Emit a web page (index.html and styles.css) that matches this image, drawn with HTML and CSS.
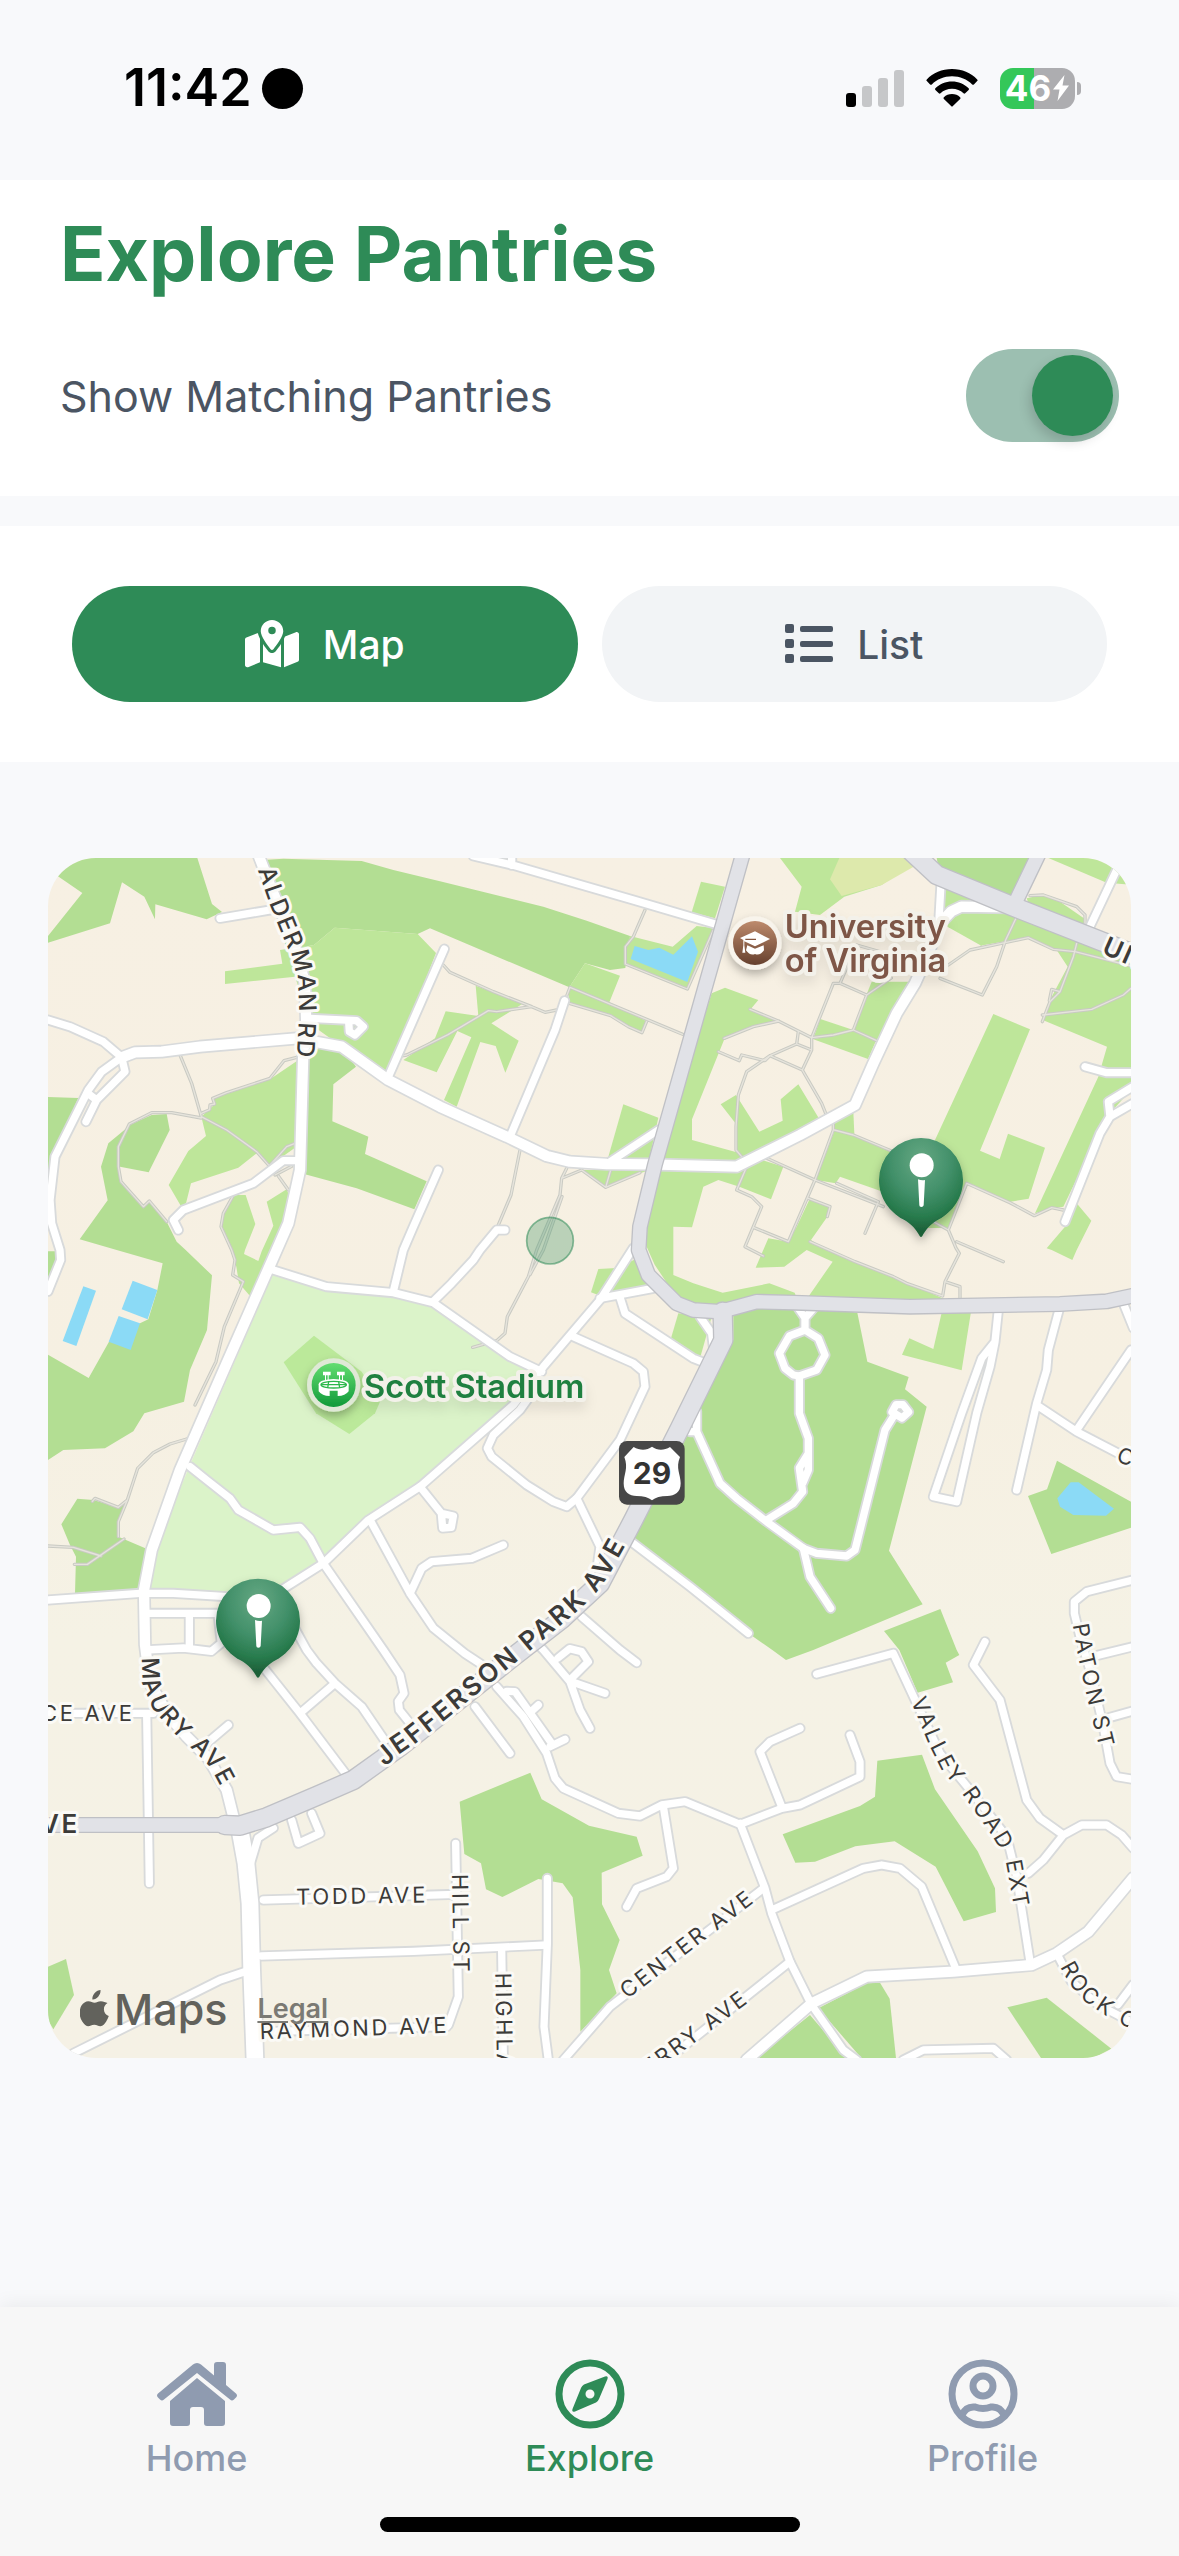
FILE: index.html
```html
<!DOCTYPE html>
<html lang="en">
  <head>
    <meta charset="UTF-8" />
    <meta name="viewport" content="width=device-width, initial-scale=1.0" />
    <title>Explore Pantries</title>
    <link rel="stylesheet" href="styles.css">
  </head>
  <body>
    <div class="status-bar">
      <div class="status-left">
        <span class="time">11:42</span>
        <span class="camera-dot"></span>
      </div>
      <div class="status-right">
        <svg class="signal" viewBox="0 0 58 38" aria-hidden="true">
          <rect x="0" y="24" width="10" height="14" rx="3" fill="#000" />
          <rect x="16" y="17" width="10" height="21" rx="3" fill="#c6c7c9" />
          <rect x="32" y="9" width="10" height="29" rx="3" fill="#c6c7c9" />
          <rect x="48" y="1" width="10" height="37" rx="3" fill="#c6c7c9" />
        </svg>
        <svg class="wifi" viewBox="0 0 52 38" aria-hidden="true">
          <path d="M26 0C16 0 7 4 .8 10.400a1.200 1.200 0 0 0 0 1.700l3.300 3.300a1.200 1.200 0 0 0 1.700 0C11 10.300 18 7.300 26 7.300s15 3 20.200 8.100a1.200 1.200 0 0 0 1.700 0l3.300-3.300a1.200 1.200 0 0 0 0-1.700C45 4 36 0 26 0z" />
          <path d="M26 12.500c-6.500 0-12.300 2.500-16.600 6.700a1.200 1.200 0 0 0 0 1.700l3.400 3.300a1.200 1.200 0 0 0 1.700 0c3-2.800 7-4.500 11.500-4.500s8.500 1.700 11.500 4.500a1.200 1.200 0 0 0 1.700 0l3.400-3.300a1.200 1.200 0 0 0 0-1.700C38.300 15 32.500 12.500 26 12.500z" />
          <path d="M26 25c-3.200 0-6 1.200-8.100 3.200a1.200 1.200 0 0 0 0 1.700l7.200 7.200a1.200 1.200 0 0 0 1.800 0l7.200-7.200a1.200 1.200 0 0 0 0-1.700C32 26.200 29.200 25 26 25z" />
        </svg>
        <div class="battery">
          <span>46</span>
          <svg viewBox="0 0 18 26" aria-hidden="true"><path d="M12.500 0 1 14.500h6.500L5.500 26 17 10.500h-6.500z" /></svg>
        </div>
      </div>
    </div>

    <header class="header">
      <h1>Explore Pantries</h1>
      <div class="toggle-row">
        <label for="matching">Show Matching Pantries</label>
        <input type="checkbox" id="matching" class="switch" checked />
      </div>
    </header>

    <div class="view-tabs">
      <button class="tab active" type="button">
        <svg class="map-icon" viewBox="0 0 576 512" aria-hidden="true"><path d="M408 120c0 54.600-73.100 151.900-105.200 192c-7.700 9.600-22 9.600-29.600 0C241.100 271.900 168 174.600 168 120C168 53.700 221.700 0 288 0s120 53.700 120 120zm8 80.400c3.500-6.900 6.700-13.800 9.600-20.600c.5-1.200 1-2.500 1.500-3.700l116-46.400C558.900 123.400 576 135 576 152V422.800c0 9.800-6 18.600-15.100 22.300L416 503V200.400zM137.600 138.300c2.400 14.100 7.200 28.300 12.800 41.500c2.900 6.800 6.100 13.700 9.600 20.600V451.800L32.900 502.700C17.100 509 0 497.400 0 480.400V209.600c0-9.800 6-18.600 15.100-22.300l122.600-49zM327.800 332c13.900-17.400 35.700-45.700 56.200-77V504.300L192 449.400V255c20.500 31.300 42.300 59.600 56.200 77c20.500 25.600 59.100 25.600 79.600 0zM288 152a40 40 0 1 0 0-80 40 40 0 1 0 0 80z" /></svg>
        Map
      </button>
      <button class="tab" type="button">
        <svg class="list-icon" viewBox="0 0 48 40" aria-hidden="true">
          <rect x="0" y="0" width="9" height="9" rx="2" /><rect x="15" y="2" width="33" height="6" rx="2" />
          <rect x="0" y="15" width="9" height="9" rx="2" /><rect x="15" y="17" width="33" height="6" rx="2" />
          <rect x="0" y="30" width="9" height="9" rx="2" /><rect x="15" y="32" width="33" height="6" rx="2" />
        </svg>
        List
      </button>
    </div>

    <main class="map-section">
      <div class="map-card">
        <svg class="map" viewBox="0 0 3249 3600" role="img" aria-label="Map of pantries near the University of Virginia">
          <defs>
            <linearGradient id="land" x1="0" y1="0" x2="0" y2="1">
              <stop offset="0" stop-color="#f7f0e3" />
              <stop offset=".45" stop-color="#f6f0e2" />
              <stop offset=".65" stop-color="#f5f2e5" />
              <stop offset="1" stop-color="#f5f1e5" />
            </linearGradient>
            <linearGradient id="brown" x1="0" y1="0" x2="0" y2="1">
              <stop offset="0" stop-color="#bd8a6c" />
              <stop offset="1" stop-color="#67412f" />
            </linearGradient>
            <linearGradient id="lime" x1="0" y1="0" x2="0" y2="1">
              <stop offset="0" stop-color="#63dd70" />
              <stop offset="1" stop-color="#109a3a" />
            </linearGradient>
            <radialGradient id="pinFill" cx=".5" cy=".22" r=".72">
              <stop offset="0" stop-color="#66a883" />
              <stop offset=".5" stop-color="#42906a" />
              <stop offset=".8" stop-color="#287b4d" />
              <stop offset="1" stop-color="#1d6039" />
            </radialGradient>
            <filter id="drop" x="-40%" y="-40%" width="180%" height="180%">
              <feDropShadow dx="0" dy="14" stdDeviation="14" flood-color="#000" flood-opacity=".28" />
            </filter>

            <g id="footpaths">
              <path d="M396 591 431 676 460 776 536 816 626 881 666 926M460 780 371 764 311 764 244 798 211 866 211 926 219 971 286 1046 304 1029 356 1091" />
              <path d="M746 598 708 608 666 661 536 704 494 721 500 738 486 741 485 755 460 766M741 856 716 866 664 924M681 951 731 925M691 954 721 996" />
              <path d="M554 1016 526 1066 519 1106 551 1176 561 1206 554 1251 586 1271 529 1406 504 1511 441 1641" />
              <path d="M426 1746 416 1743 366 1758 316 1784 269 1831 238 1926 211 1991 211 2036M238 1926 211 1948 141 1921 133 1930M0 2064 76 2068 159 2094M79 2119 118 2119 228 2043" />
              <path d="M1186 321 1206 343 1336 401 1451 446 1491 463 1526 456M1451 446 1346 461 1321 458 1291 476 1200 530 1076 591 1046 596" />
              <path d="M1791 156 1756 236 1732 266 1732 318 1918 393 1996 216M1556 414 1566 388 1904 529M1564 436 1688 473 1741 506 1782 524 1796 490" />
              <path d="M1416 876 1389 1011 1351 1101M1556 931 1541 961 1536 1011 1466 1176 1441 1256 1378 1376 1371 1426 1346 1448 1274 1468M1542 1016 1486 1176 1446 1250M1541 961 1601 936 1673 988 1776 944M1688 936 1673 988" />
              <path d="M2028 541 2116 506 2192 489M2106 454 2191 489 2291 539 2356 531 2416 516 2486 548M2291 539 2356 376 2376 376 2456 411 2416 516M2376 376 2426 261 2510 285M2456 411 2530 360" />
              <path d="M2011 581 2074 608 2081 591 2151 608 2166 593 2246 558 2251 521M2166 593 2096 641 2071 711 2064 806 2064 876 2081 896M2166 593 2263 636 2321 736 2333 766M2263 636 2291 576 2291 539M2246 558 2291 576" />
              <path d="M2356 786 2356 816 2301 966 2221 1151 2116 1108M2359 816 2416 831 2536 881M2146 896 2301 966 2506 1046M2366 976 2491 1031 2451 1126M2096 926 2066 996 2111 1016 2141 1046 2091 1166 2146 1194M2281 1021 2346 1046 2338 1076" />
              <path d="M2286 1151 2421 1211 2536 1256 2576 1276 2684 1314 2691 1271 2734 1186 2724 1170 2701 1116 2756 976 2886 1034 2959 1073 3011 1049 3046 1056M2600 1060 2701 1116M2691 1271 2736 1286 2736 1326M2726 1151 2866 1211" />
              <path d="M2701 321 2766 276 2941 239 3016 274 3081 281 3249 324M2906 176 2873 246 2846 326 2803 411 2676 361M3086 256 3076 296 3036 401 3006 431 2983 491M3036 401 3011 394 3004 428M2983 471 3131 454 3226 411 3249 391" />
              <path d="M2946 113 2986 111 3086 146 3111 171 3111 216" />
            </g>

            <g id="streets">
              <path d="M0 486 66 506 166 551 221 598 231 641 146 726 114 791M118 705 146 726" />
              <path d="M221 598 161 641 121 696 21 896 6 1026 11 1096 36 1176 38 1206 0 1300" />
              <path d="M516 181 666 156M786 481 926 488 946 506 921 531 904 521 902 490" />
              <path d="M746 908 706 908 616 976 406 1056 376 1086 391 1116" />
              <path d="M1189 273 1021 656M1550 428 1521 516 1386 836M1171 936 1096 1106 1066 1176 1036 1300M1371 1116 1346 1116 1296 1176 1276 1206 1211 1276 1156 1330" />
              <path d="M1276-6 1396 22 1756 126 2001 198M1391 22 1391-10M2680 60 2672 200" />
              <path d="M676 1236 836 1286 1036 1304 1156 1334 1386 1496 1481 1541" />
              <path d="M1756 1170 1656 1326 1486 1526 1396 1641 1260 1760 1116 1886 961 1986 826 2116 700 2196" />
              <path d="M426 1826 476 1866 546 1921 571 1956 676 2016 756 2008 786 2041 826 2116 1006 2376 1056 2451 1068 2506 1051 2530 1054 2556 1086 2596" />
              <path d="M690 2220 776 2376 806 2416 861 2476 941 2546 1016 2656M640 2420 756 2566 896 2751M756 2566 861 2476" />
              <path d="M966 1986 1086 2206 1156 2310 1250 2386 1326 2436M1086 2206 1121 2131 1151 2111 1271 2101 1366 2061" />
              <path d="M1116 1886 1180 1966 1216 1974 1210 2008 1184 2010 1180 1966" />
              <path d="M1576 1436 1756 1516 1786 1541 1791 1586 1716 1746 1586 1921 1556 1946 1516 1931 1436 1881 1331 1796 1318 1771 1336 1731 1416 1656 1456 1600" />
              <path d="M1586 1921 1656 2066 1646 2140M1656 1321 1816 1291M1716 1318 1731 1366 1936 1501 1961 1511M1956 1376 1991 1426 1996 1466M1676 918 1831 816" />
              <path d="M1946 1660 1946 1721 2016 1876 2066 1921 2156 1991 2266 2071 2306 2086 2396 2094 2421 2076 2511 1716 2536 1676M1926 1721H1946" />
              <path d="M2532 1662 2544 1640 2565 1640 2582 1662 2562 1680Z" />
              <path d="M2156 1986 2236 1936 2264 1901 2254 1830 2281 1786 2281 1741 2254 1666 2254 1556M2281 1786 2281 1836 2264 1876" />
              <path d="M2271 1416 2311 1441 2331 1491 2306 1536 2254 1554 2236 1551 2211 1531 2194 1486 2224 1434ZM2271 1416V1380L2240 1335M2271 1380 2310 1335M2266 2071 2286 2156 2348 2251M1756 2056 1926 2186 2101 2326" />
              <path d="M2851 1356 2841 1451 2801 1501 2741 1666 2656 1916 2726 1931 2786 1666 2826 1526 2841 1451" />
              <path d="M3033 1356 3001 1476 2996 1536 2966 1636 2906 1896M2966 1641 3086 1721 3249 1806M3086 1716 3249 1476M3226 1336 3256 1410" />
              <path d="M3255 2166 3116 2201 3079 2231 3079 2266 3096 2336 3130 2450 3166 2606 3186 2716 3206 2756 3255 2764M3176 2581 3255 2559M3136 2395 3255 2366" />
              <path d="M2306 2448 2536 2386 2606 2536 2676 2686 2766 2796 2876 2936 2906 3056 2946 3311" />
              <path d="M2811 2351 2776 2421 2856 2526 2936 2826 2976 2881 3046 2931 3101 2901 3176 2901 3221 2931 3255 2970M3046 2931 2986 3006 2941 3046" />
              <path d="M3026 3286 3070 3370 3150 3440 3255 3495M3210 3440 3255 3380" />
              <path d="M2076 2896 2151 3091 2171 3166 2226 3311 2291 3441 2386 3576 2426 3606M2171 3156 2446 3031 2501 3021 2556 3031 2621 3086 2721 3326" />
              <path d="M1346 2486 1426 2576 1496 2686 1521 2761 1546 2791 1711 2866 1776 2874 1841 2841 1911 2831 2076 2899 2201 2851 2256 2841 2436 2756 2436 2711 2406 2631" />
              <path d="M2201 2846 2136 2681 2166 2651 2256 2611M1846 2846 1876 3031 1856 3056 1766 3091 1736 3146" />
              <path d="M1376 2500 1401 2501 1511 2656M1446 2564 1471 2541M1506 2666 1551 2644M1281 2546 1386 2686" />
              <path d="M1440 2330 1486 2376 1566 2471 1596 2556 1626 2611M1571 2471 1671 2506M1566 2466 1621 2411 1601 2381 1565 2372 1530 2400M1601 2276 1716 2376 1766 2414" />
              <path d="M0 2226 276 2206 376 2206 536 2216M290 2266H520M424 2266V2366M291 2376 406 2370 490 2380 520 2355 510 2266" />
              <path d="M0 2566H316M296 2566 301 2876 304 3076M476 2656 541 2601M731 2886 751 2956 816 2926 791 2866M676 2910 630 2940 606 3020" />
              <path d="M646 3126 1226 3109M640 3294 1096 3280 1496 3261M76 3586 276 3486 516 3366 590 3341M646 3521 1196 3506M1223 2956 1231 3416 1201 3501" />
              <path d="M1361 3276 1366 3606M1498 3061 1498 3256 1488 3506 1501 3606M2146 3091 1686 3446 1546 3606M2226 3311 1856 3606M2566 3606 2626 3576 2836 3571 2876 3606" />
              <path d="M3206 36 3121 216M3111 626 3176 644 3255 644M3051 1091 3156 826 3186 776 3255 736M3186 776 3181 731 3255 686" />
            </g>

            <g id="avenues">
              <path d="M631-10 676 106 736 246 771 376 776 536 766 576 756 936 721 1096 686 1176 536 1516 396 1836 311 2076 288 2196 291 2360 306 2476 360 2570 416 2636 480 2700 536 2796 561 2896" />
              <path d="M221 598 261 583 341 581 456 566 746 541 881 566 1021 666 1176 746 1376 836 1496 894 1566 911 1676 918 1806 919 2066 926 2256 831 2421 741 2476 616 2546 466 2601 376 2640 290 2672 200 2710 160 2740 146 2880 148" />
              <path d="M2096 3606 2291 3436 2456 3356 2716 3341 2951 3321 3026 3286 3121 3221 3255 3060" />
            </g>

            <path id="southRoad" d="M576 2916 594 3016 606 3136 611 3336 621 3610" />

            <g id="highway">
              <path d="M2084-10 1821 919 1776 1106 1772 1176 1801 1251 1886 1336 1936 1356 2016 1361 2126 1331 2240 1334 2586 1346 3036 1338 3176 1330 3260 1312" />
              <path d="M-10 2901 516 2901 576 2901M2971-10 2896 146" />
            </g>
            <g id="highwayWide">
              <path d="M2024 1361 2026 1446 1896 1710 1756 1986 1656 2176 1540 2284 1396 2396 1056 2666 916 2766 806 2814 656 2878 576 2903 530 2901" />
              <path d="M2590-20 2666 51 2896 146 3176 256 3260 290" />
            </g>

            <path id="lblAlderman" d="M629 36 666 141 700 225 735 305 750 370 754 460 744 640" />
            <path id="lblMaury" d="M281 2399 284 2480 316 2556 356 2601 400 2648 441 2681 486 2726 531 2810" />
            <path id="lblJefferson" d="M1010 2726 1066 2680 1116 2646 1206 2574 1286 2508 1356 2452 1456 2370 1560 2284 1636 2216 1684 2150 1790 1960" />
            <path id="lblHill" d="M1212 3048 1218 3400" />
            <path id="lblHighland" d="M1342 3344 1350 3800" />
            <path id="lblCenter" d="M1738 3424 2140 3116" />
            <path id="lblCherry" d="M1611 3798 2107 3429" />
            <path id="lblValley" d="M2588 2528 2641 2656 2681 2736 2756 2826 2831 2931 2861 2981 2876 3026 2904 3180" />
            <path id="lblPaton" d="M3074 2300 3091 2401 3126 2556 3164 2710" />
            <path id="lblRock" d="M3036 3326 3066 3380 3112 3432 3176 3475 3290 3535 3500 3640" />
          </defs>

          <rect width="3249" height="3600" fill="url(#land)" />

          <!-- parks and woods -->
          <g class="woods">
            <polygon points="0,0 448,0 492,138 522,162 476,184 322,139 321,184 289,116 222,73 186,196 0,254 0,234 103,105 32,56 0,36" />
            <polygon points="645,6 706,2 941,9 1036,36 1176,70 1486,146 1616,188 1746,234 1732,330 1686,336 1611,316 1564,388 1146,211 1109,228 860,209 798,261 716,276" />
            <polygon points="776,540 881,566 924,626 856,679 853,790 961,836 951,888 1136,970 1099,1054 926,991 771,949" />
            <polygon points="0,717 91,720 16,886 0,976" />
            <polygon points="356,768 365,816 302,943 216,926 211,861 244,801 311,771" />
            <polygon points="181,856 241,806 211,866 214,926 219,966 286,1048 306,1031 356,1091 386,1151 413,1176 492,1252 477,1416 426,1536 408,1631 289,1666 256,1720 171,1771 46,1776 0,1806 0,1490 122,1560 183,1451 276,1396 301,1384 328,1296 344,1216 206,1176 95,1144 179,1027 159,926" />
            <polygon points="0,1180 30,1180 30,1220 0,1290" />
            <polygon points="88,1922 136,1926 211,1948 234,1931 211,1986 211,2036 292,2071 276,2196 81,2206 84,2096 66,2061 40,1999" />
            <polygon points="0,3326 54,3303 78,3411 16,3514 0,3486" />
            <polygon points="2666,0 2951,0 2896,126 2676,51" />
            <polygon points="2428,1364 2458,1511 2582,1557 2571,1594 2636,1646 2523,2078 2624,2239 2296,2376 2214,2406 2173,2376 2116,2336 1756,2046 1916,1736 1941,1656 2056,1446 2056,1350 2200,1330" />
            <polygon points="3027,1808 3249,1931 3249,2009 3010,2088 2940,1914 2997,1894" />
            <polygon points="2508,2319 2677,2253 2726,2376 2734,2391 2693,2414 2715,2473 2609,2504 2554,2376" />
            <polygon points="2488,2708 2622,2690 2661,2794 2789,2980 2841,3091 2844,3162 2747,3190 2663,3026 2540,2950 2422,2965 2301,3011 2242,3014 2204,2929 2436,2844 2481,2816" />
            <polygon points="2311,3451 2456,3376 2496,3374 2525,3422 2544,3600 2440,3600" />
            <polygon points="2286,3471 2396,3600 2126,3600" />
            <polygon points="2878,3448 2996,3419 3190,3572 3136,3600 2979,3600" />
            <polygon points="1235,2831 1447,2744 1481,2824 1623,2903 1766,2936 1784,2993 1661,3044 1662,3139 1715,3246 1683,3336 1706,3406 1597,3521 1597,3336 1574,3118 1544,3076 1471,3063 1363,3117 1314,3094 1299,3016 1249,2988" />
          </g>
          <g class="grass">
            <polygon points="860,209 1109,228 1164,285 1020,656 880,565 790,500 741,356 531,378 531,340 703,317 696,276 798,261" />
            <polygon points="760,600 666,664 496,721 501,738 460,776 474,834 421,879 362,981 400,1046 414,1036 429,976 571,929 626,886 664,924 740,870" />
            <polygon points="556,1011 593,1011 622,1098 591,1176 588,1188 631,1209 641,1180 676,1103 656,1031 716,994 740,1060 680,1176 608,1316 573,1276 565,1226 545,1170 520,1105 526,1060" />
            <polygon points="1746,234 1874,266 1946,204 2001,211 1921,394 1732,318 1732,266" />
            <polygon points="1611,316 1716,353 1684,433 1796,490 1782,524 1741,506 1688,473 1561,431 1564,388" />
            <polygon points="1959,71 2031,86 2001,181 1931,163" />
            <polygon points="1283,383 1426,436 1330,496 1412,548 1372,644 1343,564 1297,552 1226,746 1188,726 1270,538 1228,519 1166,643 1066,606 1161,541 1193,460 1291,474" />
            <polygon points="1726,739 1831,779 1800,920 1680,900" />
            <polygon points="1596,936 1806,936 1776,946 1673,988" />
            <polygon points="1991,406 2031,389 2131,426 2106,456 2192,489 2116,506 2028,546 1932,784 1932,846 2066,883 2206,926 2169,1024 2074,986 2011,966 1966,986 1932,1108 1876,1106 1876,1251 1936,1276 2024,1304 2164,1276 2240,1304 2246,1320 2000,1360 1880,1310 1820,1220 1780,1130 1800,1000" />
            <polygon points="2196,0 2616,0 2501,81 2389,116 2316,171 2241,161 2261,86" />
            <polygon points="2688,71 2876,146 2906,180 2800,263 2701,208 2686,196" />
            <polygon points="2796,263 2941,238 3026,276 3059,326 3006,426 2984,486 3177,566 3151,656 2961,1066 3011,1051 3046,1046 3176,776 3249,696 3249,316 3186,276 2906,171" />
            <polygon points="3086,1036 3130,1088 3086,1176 3073,1206 3011,1176 2996,1171 3051,1106" />
            <polygon points="3001,0 3249,0 3249,80 3176,74" />
            <polygon points="2936,121 2981,111 3036,131 3111,183 3106,216 2946,151" />
            <polygon points="2836,468 2946,514 2796,878 2855,903 2880,827 2991,869 2942,1022 2884,1032 2760,980 2700,1110 2640,1110 2560,1000 2661,846" />
            <polygon points="2471,371 2586,371 2486,548 2416,516 2454,414" />
            <polygon points="2317,483 2416,516 2356,531 2296,541" />
            <polygon points="2296,544 2416,518 2484,548 2460,603" />
            <polygon points="2018,739 2064,711 2134,821 2204,788 2198,724 2251,679 2312,780 2086,900 2066,880 2066,800" />
            <polygon points="2416,761 2419,828 2361,816 2356,791" />
            <polygon points="2359,819 2416,831 2540,880 2530,1010 2376,956 2363,976 2304,966" />
            <polygon points="2286,1021 2346,1046 2338,1076 2289,1146 2326,1171 2536,1256 2696,1326 2281,1316 2354,1211 2276,1176 2209,1226 2123,1229 2161,1141 2221,1151 2246,1106" />
            <polygon points="1891,1366 1990,1380 1956,1501 1869,1441" />
            <polygon points="1651,1233 1706,1230 1770,1200 1810,1286 1664,1316 1629,1303" />
            <polygon points="2681,1364 2769,1361 2741,1537 2562,1490 2584,1441 2656,1473" />
          </g>
          <polygon fill="#dde9ac" points="2374,0 2616,0 2606,21 2501,81 2381,114 2346,64" />
          <polygon fill="#dbf3c9" points="681,1230 836,1290 1036,1306 1166,1340 1386,1500 1481,1546 1396,1641 1116,1886 961,1986 826,2116 716,2196 516,2216 376,2201 300,2196 326,2061 426,1821" />
          <polygon fill="#bbe99a" points="798,1433 941,1541 996,1631 981,1666 904,1728 804,1666 707,1513" />

          <!-- water -->
          <g class="water">
            <polygon points="106,1285 144,1298 85,1464 44,1449" />
            <polygon points="254,1268 328,1296 299,1384 221,1354" />
            <polygon points="212,1374 276,1396 248,1476 182,1451" />
            <polygon points="1760,264 1801,276 1834,269 1876,290 1932,235 1950,281 1918,372 1748,303" />
            <polygon points="3068,1873 3092,1873 3198,1952 3174,1973 3076,1971 3036,1946 3028,1921" />
          </g>

          <!-- roads: casing first, fill on top -->
          <use href="#footpaths" class="path-edge" />
          <use href="#footpaths" class="path-fill" />
          <use href="#streets" class="street-edge" />
          <use href="#avenues" class="avenue-edge" />
          <use href="#southRoad" class="south-edge" />
          <use href="#streets" class="street-fill" />
          <use href="#avenues" class="avenue-fill" />
          <use href="#southRoad" class="south-fill" />
          <use href="#highway" class="highway-edge" />
          <use href="#highwayWide" class="highway-wide-edge" />
          <use href="#highway" class="highway-fill" />
          <use href="#highwayWide" class="highway-wide-fill" />

          <!-- street names -->
          <g class="street-name">
            <text class="bold"><textPath href="#lblJefferson">JEFFERSON PARK AVE</textPath></text>
            <text class="medium"><textPath href="#lblAlderman">ALDERMAN RD</textPath></text>
            <text class="medium"><textPath href="#lblMaury">MAURY AVE</textPath></text>
            <text class="bold" x="96" y="2924" text-anchor="end">VE</text>
            <text class="bold" transform="translate(3158 284) rotate(24)">UNIVERSITY AVE</text>
            <text x="260" y="2588" text-anchor="end">CE AVE</text>
            <text transform="translate(745 3140) rotate(-1)">TODD AVE</text>
            <text transform="translate(636 3544) rotate(-2)">RAYMOND AVE</text>
            <text><textPath href="#lblHill">HILL ST</textPath></text>
            <text><textPath href="#lblHighland">HIGHLAND</textPath></text>
            <text><textPath href="#lblCenter">CENTER AVE</textPath></text>
            <text text-anchor="end"><textPath href="#lblCherry" startOffset="100%">CHERRY AVE</textPath></text>
            <text><textPath href="#lblValley">VALLEY ROAD EXT</textPath></text>
            <text><textPath href="#lblPaton">PATON ST</textPath></text>
            <text><textPath href="#lblRock">ROCK CREEK RD</textPath></text>
            <text transform="translate(3202 1808) rotate(22)">C</text>
          </g>

          <!-- US 29 shield -->
          <g>
            <rect x="1713" y="1749" width="197" height="191" rx="24" fill="#474747" />
            <path fill="#fff" d="M1757 1767C1776 1778 1796 1778 1812 1766C1828 1778 1848 1778 1866 1767L1896 1797C1882 1830 1898 1850 1898 1876C1898 1904 1880 1914 1858 1914C1838 1914 1822 1918 1812 1927C1802 1918 1786 1914 1766 1914C1744 1914 1727 1904 1727 1876C1727 1850 1742 1830 1729 1797Z" />
            <text class="route-number" x="1812" y="1879" text-anchor="middle">29</text>
          </g>

          <!-- places -->
          <g filter="url(#drop)">
            <circle cx="2121" cy="255" r="80" fill="#f8f4ec" />
            <circle cx="2121" cy="255" r="66" fill="url(#brown)" />
          </g>
          <path fill="#fff" d="M2121 220 2166 243 2121 265 2089 250V262L2092 284H2083L2086 262V246L2076 240ZM2098 262 2121 272 2147 262 2148 277Q2136 294 2121 288Q2106 294 2094 277Z" />
          <path d="M2092 244H2124" stroke="#86573f" stroke-width="4" />
          <g class="place university">
            <text x="2210" y="239">University</text>
            <text x="2210" y="343">of Virginia</text>
          </g>
          <g filter="url(#drop)">
            <circle cx="857" cy="1581" r="80" fill="#dfe9d6" />
            <circle cx="857" cy="1581" r="66" fill="url(#lime)" />
          </g>
          <g fill="#fff">
            <path d="M825 1541H848V1552H842V1566H839V1552H834V1566H831V1552H825ZM867 1541H890V1552H885V1566H882V1552H876V1566H873V1552H867Z" />
            <path d="M812 1580V1600Q822 1614 845 1614V1598H869V1614Q892 1614 902 1600V1580Z" />
            <ellipse cx="857" cy="1579" rx="45" ry="16" />
          </g>
          <g fill="none" stroke="#2cb84b" stroke-width="4">
            <ellipse cx="857" cy="1580" rx="38" ry="10" />
            <path d="M819 1580H895M842 1571 839 1590M872 1571 875 1590" />
          </g>
          <g class="place stadium">
            <text x="948" y="1619">Scott Stadium</text>
          </g>

          <circle cx="1506" cy="1148" r="70" fill="#2e8b57" fill-opacity=".3" stroke="#2e8b57" stroke-opacity=".55" stroke-width="5" />

          <!-- pantry pins -->
          <g id="pin" transform="translate(2619 966)">
            <path filter="url(#drop)" fill="url(#pinFill)" d="M0-126A126 126 0 0 1 126 0C126 54 94 96 54 118C28 132 14 150 4 168Q0 174-4 168C-14 150-28 132-54 118C-94 96-126 54-126 0A126 126 0 0 1 0-126Z" />
            <circle cx="2" cy="-44" r="36" fill="#fff" />
            <path fill="#fff" d="M-9-2Q2 2 12 0L8 76Q7 81 1 81Q-5 81-5 76Z" />
          </g>
          <use href="#pin" x="-1989" y="1322" />
        </svg>
        <div class="attribution">
          <svg viewBox="0 0 30 38" aria-hidden="true">
            <path d="M20.500 0c.3 2.600-.8 5-2.300 6.700-1.500 1.700-3.700 2.900-5.800 2.700-.3-2.500.9-5 2.300-6.500C16.300 1.200 18.700.1 20.500 0zM27.500 13c-2.300 1.500-3.600 3.500-3.600 6.200 0 3.200 1.900 5.600 4.900 6.800-.6 1.900-1.500 3.700-2.600 5.400-1.600 2.400-3.200 4.700-5.800 4.800-2.500 0-3.300-1.500-6.200-1.500-2.800 0-3.700 1.500-6.100 1.500-2.500.1-4.400-2.500-6-4.900C-1.300 26.400-.8 19.300 1.500 15.500 3.200 12.800 5.800 11.200 8.300 11.200c2.600 0 4.200 1.500 6.300 1.500 2.100 0 3.300-1.500 6.300-1.500 2.400 0 4.900 1.200 6.600 1.800z" />
          </svg>
          <span>Maps</span>
          <a href="#legal">Legal</a>
        </div>
      </div>
    </main>

    <nav class="bottom-nav">
      <div class="nav-items">
        <a href="#home">
          <svg class="home-icon" viewBox="0 0 82 64" aria-hidden="true">
            <path d="M37 2.500a6 6 0 0 1 8 0l13 11V3a3 3 0 0 1 3-3h6a3 3 0 0 1 3 3v20l10 8.500q2 2 0 4l-2 2q-2 2-4 0L41 11 8 37.500q-2 2-4 0l-2-2q-2-2 0-4z" />
            <path d="M41 16 69 39v22a3 3 0 0 1-3 3H51a3 3 0 0 1-3-3V48a3 3 0 0 0-3-3h-8a3 3 0 0 0-3 3v13a3 3 0 0 1-3 3H17a3 3 0 0 1-3-3V39z" />
          </svg>
          Home
        </a>
        <a href="#explore" class="active">
          <svg class="round-icon" viewBox="0 0 70 70" aria-hidden="true">
            <circle cx="35" cy="35" r="31" fill="none" stroke="currentColor" stroke-width="7" />
            <path fill-rule="evenodd" d="M50 17.500q3.500-1 2.500 2.500L44 40q-1 2.500-3 3.500L20 52.500q-3.500 1-2.500-2.500L26 29q1-2.500 3-3.500zM35 30.500a4.500 4.500 0 1 0 0 9 4.500 4.500 0 1 0 0-9z" />
          </svg>
          Explore
        </a>
        <a href="#profile">
          <svg class="round-icon" viewBox="0 0 70 70" aria-hidden="true" fill="none" stroke="currentColor" stroke-width="7">
            <circle cx="35" cy="35" r="31" />
            <circle cx="35" cy="27" r="10" />
            <path d="M14 56Q18 47 27 48Q35 51 43 48Q52 47 56 56" />
          </svg>
          Profile
        </a>
      </div>
      <div class="home-indicator"></div>
    </nav>
  </body>
</html>
```

FILE: styles.css
```css
:root {
  --green: #2e8b57;
  --slate: #4b5563;
  --muted: #8f9bb0;
  --page: #f8f9fb;
}

* {
  box-sizing: border-box;
}

body {
  margin: 0;
  min-height: 100vh;
  display: flex;
  flex-direction: column;
  background: var(--page);
  font-family: Inter, "Liberation Sans", sans-serif;
  color: var(--slate);
}

/* Status bar */
.status-bar {
  display: flex;
  justify-content: space-between;
  align-items: center;
  height: 180px;
  padding: 0 98px 4px 124px;
  color: #000;
}

.status-left,
.status-right {
  display: flex;
  align-items: center;
}

.status-left {
  gap: 10px;
}

.status-right {
  gap: 22px;
}

.time {
  font-size: 52px;
  font-weight: 600;
  line-height: 60px;
}

.camera-dot {
  width: 41px;
  height: 41px;
  border-radius: 50%;
  background: #000;
}

.signal {
  width: 58px;
  height: 38px;
}

.wifi {
  width: 52px;
  height: 38px;
}

.battery {
  position: relative;
  display: flex;
  align-items: center;
  justify-content: center;
  gap: 1px;
  width: 75px;
  height: 41px;
  margin-right: 6px;
  border-radius: 13px;
  background: linear-gradient(90deg, #34c759 46%, #adadb0 46%);
  color: #fff;
  font-size: 35px;
  font-weight: 700;
  line-height: 41px;
}

.battery::after {
  content: "";
  position: absolute;
  left: 77px;
  top: 14px;
  width: 4px;
  height: 13px;
  border-radius: 0 4px 4px 0;
  background: #adadb0;
}

.battery svg {
  width: 18px;
  height: 26px;
  fill: #fff;
}

/* Header */
.header {
  padding: 27px 60px 54px;
  background: #fff;
}

.header h1 {
  margin: 0 0 48px;
  color: var(--green);
  font-size: 75px;
  font-weight: 700;
  line-height: 94px;
}

.toggle-row {
  display: flex;
  justify-content: space-between;
  align-items: center;
}

.toggle-row label {
  font-size: 43px;
  line-height: 54px;
}

.switch {
  appearance: none;
  display: flex;
  justify-content: flex-end;
  align-items: center;
  width: 153px;
  height: 93px;
  margin: 0;
  padding: 6px;
  border-radius: 48px;
  background: #9cbfb1;
  cursor: pointer;
}

.switch::before {
  content: "";
  width: 81px;
  height: 81px;
  border-radius: 50%;
  background: var(--green);
  box-shadow: -3px 6px 12px rgba(0, 0, 0, 0.15);
}

.switch:not(:checked) {
  justify-content: flex-start;
}

/* Map / List tabs */
.view-tabs {
  display: flex;
  gap: 24px;
  margin-top: 30px;
  padding: 60px 72px;
  background: #fff;
}

.tab {
  flex: 1;
  display: flex;
  justify-content: center;
  align-items: center;
  gap: 24px;
  height: 116px;
  border: 0;
  border-radius: 58px;
  background: #f2f4f6;
  color: var(--slate);
  font-family: inherit;
  font-size: 39px;
  font-weight: 500;
  cursor: pointer;
}

.tab.active {
  background: var(--green);
  color: #fff;
}

.tab svg {
  fill: currentColor;
}

.map-icon {
  width: 54px;
  height: 48px;
}

.list-icon {
  width: 48px;
  height: 40px;
}

/* Map */
.map-section {
  padding: 96px 48px;
}

.map-card {
  position: relative;
  overflow: hidden;
  border-radius: 48px;
}

.map {
  display: block;
  width: 100%;
  height: auto;
}

.woods {
  fill: #b3de93;
}

.grass {
  fill: #bee69a;
}

.water {
  fill: #8bdaf6;
}

.path-edge,
.path-fill,
.street-edge,
.street-fill,
.avenue-edge,
.avenue-fill,
.south-edge,
.south-fill,
.highway-edge,
.highway-fill,
.highway-wide-edge,
.highway-wide-fill {
  fill: none;
  stroke-linecap: round;
  stroke-linejoin: round;
}

.path-edge {
  stroke: #c9cac3;
  stroke-width: 10;
}

.path-fill {
  stroke: #e6e4dc;
  stroke-width: 4;
}

.street-edge,
.avenue-edge,
.south-edge {
  stroke: #d8dadb;
}

.street-fill,
.avenue-fill,
.south-fill {
  stroke: #fff;
}

.street-edge {
  stroke-width: 33;
}

.street-fill {
  stroke-width: 22;
}

.avenue-edge {
  stroke-width: 41;
}

.avenue-fill {
  stroke-width: 31;
}

.south-edge {
  stroke-width: 60;
}

.south-fill {
  stroke-width: 50;
}

.highway-edge,
.highway-wide-edge {
  stroke: #bfc0c5;
}

.highway-fill,
.highway-wide-fill {
  stroke: #e1e2e7;
}

.highway-edge {
  stroke-width: 48;
}

.highway-fill {
  stroke-width: 40;
}

.highway-wide-edge {
  stroke-width: 62;
}

.highway-wide-fill {
  stroke-width: 54;
}

.street-name {
  fill: #3c3b39;
  stroke: #fbfaf6;
  stroke-width: 18;
  stroke-linejoin: round;
  paint-order: stroke;
  font-size: 66px;
  letter-spacing: 8px;
}

.street-name .medium {
  font-size: 72px;
  font-weight: 500;
  letter-spacing: 6px;
}

.street-name .bold {
  font-size: 78px;
  font-weight: 600;
}

.route-number {
  fill: #333;
  font-size: 90px;
  font-weight: 700;
}

.place {
  stroke: #f3f1ea;
  stroke-width: 24;
  stroke-linejoin: round;
  paint-order: stroke;
  font-size: 98px;
  font-weight: 600;
  filter: drop-shadow(0 24px 18px rgba(0, 0, 0, 0.08));
}

.university {
  fill: #7e5647;
}

.stadium {
  fill: #1f8040;
}

.attribution {
  position: absolute;
  left: 32px;
  bottom: 22px;
  display: flex;
  align-items: center;
  color: #62625c;
  font-size: 43px;
  font-weight: 500;
  line-height: 54px;
}

.attribution svg {
  width: 30px;
  height: 38px;
  margin-right: 4px;
  fill: currentColor;
}

.attribution a {
  margin-left: 30px;
  color: #7b7a74;
  font-size: 27px;
  font-weight: 600;
  line-height: 32px;
  text-underline-offset: 3px;
}

/* Bottom navigation */
.bottom-nav {
  margin-top: auto;
  padding-bottom: 24px;
  background: #f7f7f7;
  box-shadow: 0 -3px 18px rgba(0, 0, 0, 0.06);
}

.nav-items {
  display: flex;
  padding-top: 52px;
}

.nav-items a {
  flex: 1;
  display: flex;
  flex-direction: column;
  align-items: center;
  gap: 7px;
  color: var(--muted);
  font-size: 36px;
  font-weight: 500;
  line-height: 44px;
  text-decoration: none;
}

.nav-items a.active {
  color: var(--green);
}

.nav-items svg:not([fill]) {
  fill: currentColor;
}

.round-icon {
  width: 70px;
  height: 70px;
}

.home-icon {
  width: 82px;
  height: 64px;
  margin: 3px 0;
}

.home-indicator {
  width: 420px;
  height: 15px;
  margin: 37px auto 0;
  border-radius: 8px;
  background: #000;
}
```
